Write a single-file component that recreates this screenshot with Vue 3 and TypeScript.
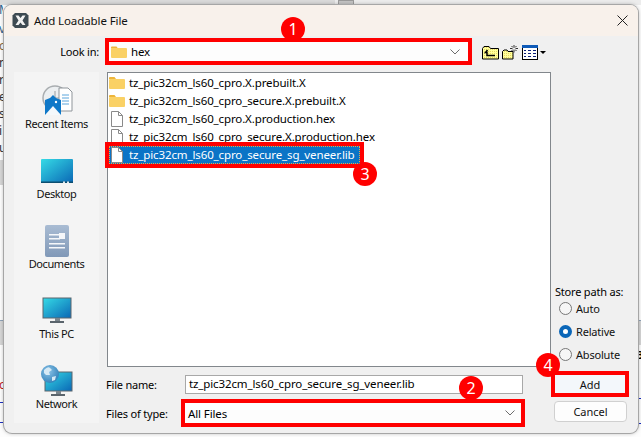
<template>
  <div class="desk">
    <div class="behind">
      <span
        v-for="g in glyphs"
        :key="g.y"
        class="glyph"
        :style="{ top: g.y + 'px', color: g.color }"
      >{{ g.ch }}</span>
      <div class="band left-band"></div>
      <div class="band low-band"></div>
      <div class="band right-band"></div>
      <div class="top-left"></div>
      <div class="scroll-btn"></div>
      <div class="blue-line" style="left: 0; top: 402px; width: 4px"></div>
      <div class="blue-line" style="left: 0; top: 422px; width: 4px"></div>
      <div class="blue-line" style="left: 637px; top: 398px; width: 4px"></div>
      <div class="blue-line" style="left: 637px; top: 423px; width: 4px"></div>
      <span class="side-mark">3</span>
    </div>

    <div class="dialog">
      <header class="titlebar">
        <svg class="logo" width="17" height="17" viewBox="0 0 17 17">
          <path d="M3 1h11l2.500 2.500v10L14 16H3L.5 13.500v-10z" fill="#3d4a52" />
          <path d="M3.500 3.500h3L8.500 6l2-2.500h3L10.500 8.500l3 4.500h-3L8.500 10.500 6.500 13h-3l3-4.500z" fill="#f2f2f2" />
        </svg>
        <span class="title">Add Loadable File</span>
        <svg class="close" width="11" height="11" viewBox="0 0 11 11">
          <path d="M.5.5l10 10M10.500.5l-10 10" stroke="#222" stroke-width="1" fill="none" />
        </svg>
      </header>

      <div class="look-row">
        <label class="look-label">Look in:</label>
        <div class="combo look-combo marked">
          <svg width="16" height="16" viewBox="0 0 16 16" class="combo-folder">
            <path d="M0 3.500a1 1 0 0 1 1-1h4.500l1.500 2H0z" fill="#eeb53a" />
            <rect x="0" y="4" width="16" height="10" rx="1" fill="#fad165" />
          </svg>
          <span class="file-text">hex</span>
          <svg class="chev" width="10" height="6" viewBox="0 0 10 6">
            <path d="M.5.500L5 5 9.500.5" stroke="#6d6d6d" fill="none" />
          </svg>
        </div>
        <div class="tools">
          <svg width="17" height="15" viewBox="0 0 17 15">
            <path d="M.5 14V3.500L2 1.500h5l1.500 2h8V14z" fill="url(#dith)" stroke="#000" />
            <path d="M5.500 5L3.500 7.500h1.500v3h8" stroke="#000" stroke-width="1.500" fill="none" />
          </svg>
          <svg width="16" height="15" viewBox="0 0 16 15" class="tool-new">
            <path d="M.5 14V6.500L2 5h3l1 1.500h5V14z" fill="url(#dith)" stroke="#000" />
            <path d="M12 0v2.500M12 5v2.500M8 3.500h2.500M13.500 3.500H16M9.500 1l1.500 1.500M14.500 1L13 2.500M9.500 6L11 4.500M14.500 6L13 4.500" stroke="#333" />
          </svg>
          <svg width="16" height="15" viewBox="0 0 16 15" class="tool-view">
            <rect x=".5" y=".5" width="15" height="14" fill="#fff" stroke="#000" />
            <rect x="0" y="0" width="16" height="3" fill="#0f5bb8" />
            <path d="M2 5h2v1H2zM6 5h3v1H6zM11 5h3v1h-3zM2 8h2v1H2zM6 8h3v1H6zM11 8h3v1h-3zM2 11h2v1H2zM6 11h3v1H6zM11 11h3v1h-3z" fill="#0b1f7a" />
          </svg>
          <i class="caret"></i>
        </div>
      </div>

      <div class="middle">
        <nav class="places">
          <div v-for="p in places" :key="p" class="place">
            <svg v-if="p === 'Recent Items'" width="32" height="32" viewBox="0 0 32 32">
              <circle cx="14" cy="13" r="12" fill="#eceff1" stroke="#a9adb0" stroke-width="1.500" />
              <path d="M14 6v7h5" stroke="#9a9ea1" fill="none" />
              <path d="M18 3h9l4 4v19H18z" fill="#fff" stroke="#8f959a" />
              <path d="M21 10h7M21 13h7M21 16h7M21 19h7" stroke="#5aa5dc" />
              <path d="M4 15l5-2 3-3 3 3 5 2v15H4z" fill="#0f78c8" />
              <path d="M4 30l8-9 8 9z" fill="#f4f8fb" />
              <circle cx="15" cy="17" r="1.200" fill="#fff" />
            </svg>
            <svg v-else-if="p === 'Desktop'" width="32" height="32" viewBox="0 0 32 32">
              <defs>
                <linearGradient id="screen" x1="0" y1="0" x2="1" y2="1">
                  <stop offset="0" stop-color="#35dbe6" />
                  <stop offset="1" stop-color="#0a67b5" />
                </linearGradient>
              </defs>
              <path d="M0 5a1 1 0 0 1 1-1h30a1 1 0 0 1 1 1v23H0z" fill="url(#screen)" />
              <rect x="0" y="26.500" width="32" height="1.500" fill="#0c4e70" />
              <rect x="22" y="26.500" width="2" height="1.500" fill="#dfe9ef" />
              <rect x="26" y="26.500" width="2" height="1.500" fill="#dfe9ef" />
            </svg>
            <svg v-else-if="p === 'Documents'" width="32" height="32" viewBox="0 0 32 32">
              <defs>
                <linearGradient id="doc" x1="0" y1="0" x2="0" y2="1">
                  <stop offset="0" stop-color="#a9bcd3" />
                  <stop offset="1" stop-color="#8098b7" />
                </linearGradient>
              </defs>
              <rect x="4" y="0" width="24" height="32" rx="2" fill="url(#doc)" />
              <path d="M8 9h11v1.500H8zM8 13h11v1.500H8zM8 18h16v1.500H8zM8 22h16v1.500H8z" fill="#f5f7fa" />
              <rect x="18" y="8" width="6" height="6" fill="#f5f7fa" />
            </svg>
            <svg v-else-if="p === 'This PC'" width="32" height="32" viewBox="0 0 32 32">
              <defs>
                <linearGradient id="pc" x1="0" y1="0" x2="1" y2="1">
                  <stop offset="0" stop-color="#35dbe6" />
                  <stop offset="1" stop-color="#0a67b5" />
                </linearGradient>
              </defs>
              <rect x="2" y="3" width="28" height="20" fill="url(#pc)" stroke="#5a646c" />
              <rect x="14" y="23" width="5" height="3" fill="#7b858c" />
              <rect x="9" y="26" width="14" height="2" fill="#5a646c" />
            </svg>
            <svg v-else width="32" height="32" viewBox="0 0 32 32">
              <defs>
                <linearGradient id="net" x1="0" y1="0" x2="1" y2="1">
                  <stop offset="0" stop-color="#35dbe6" />
                  <stop offset="1" stop-color="#0a67b5" />
                </linearGradient>
                <radialGradient id="globe" cx="0.4" cy="0.35" r="0.7">
                  <stop offset="0" stop-color="#8cc4e8" />
                  <stop offset="1" stop-color="#2f7fb8" />
                </radialGradient>
              </defs>
              <rect x="4" y="7" width="27" height="19" fill="url(#net)" stroke="#5a646c" />
              <rect x="15" y="26" width="5" height="3" fill="#7b858c" />
              <rect x="10" y="29" width="14" height="2" fill="#5a646c" />
              <circle cx="9" cy="9" r="9" fill="url(#globe)" />
              <path d="M3 5q4-4 6-2l2 2-3 2 1 3-4 0-2-2zM11 12l4-1-1 4-3 1z" fill="#d5e9f5" />
            </svg>
            <span>{{ p }}</span>
          </div>
        </nav>

        <div class="center">
          <div class="list">
            <div
              v-for="f in files"
              :key="f.name"
              class="file"
              :class="{ selected: f.selected }"
            >
              <svg v-if="f.kind === 'dir'" width="16" height="16" viewBox="0 0 16 16">
                <path d="M0 3a1 1 0 0 1 1-1h4.500l1.500 2H0z" fill="#eeb53a" />
                <rect x="0" y="4" width="16" height="10" rx="1" fill="#fad165" />
              </svg>
              <svg v-else width="16" height="16" viewBox="0 0 16 16">
                <path d="M2.500.5h7l4 4v11h-11z" fill="#fff" stroke="#8a8a8a" />
                <path d="M9.500.5v4h4" fill="none" stroke="#8a8a8a" />
              </svg>
              <span class="file-name file-text">{{ f.name }}</span>
            </div>
          </div>
          <div class="field-row name-row">
            <label>File name:</label>
            <div class="name-input file-text">tz_pic32cm_ls60_cpro_secure_sg_veneer.lib</div>
          </div>
          <div class="field-row type-row">
            <label>Files of type:</label>
            <div class="combo type-combo marked">
              <span class="file-text">All Files</span>
              <svg class="chev" width="10" height="6" viewBox="0 0 10 6">
                <path d="M.5.500L5 5 9.500.5" stroke="#6d6d6d" fill="none" />
              </svg>
            </div>
          </div>
        </div>

        <aside class="store">
          <div class="store-title">Store path as:</div>
          <div v-for="o in storeOptions" :key="o" class="radio-row">
            <i class="radio" :class="{ on: o === 'Relative' }"></i>
            <span>{{ o }}</span>
          </div>
          <button class="btn add marked">Add</button>
          <button class="btn cancel">Cancel</button>
        </aside>
      </div>

      <span
        v-for="b in badges"
        :key="b.n"
        class="badge"
        :style="{ left: b.x + 'px', top: b.y + 'px' }"
      >{{ b.n }}</span>
    </div>

    <svg width="0" height="0" class="defs">
      <defs>
        <pattern id="dith" width="2" height="2" patternUnits="userSpaceOnUse">
          <rect width="2" height="2" fill="#ffff9c" />
          <rect width="1" height="1" fill="#e8d860" />
        </pattern>
      </defs>
    </svg>
  </div>
</template>

<script setup lang="ts">
interface FileRow {
  name: string
  kind: 'dir' | 'file'
  selected?: boolean
}

const places = ['Recent Items', 'Desktop', 'Documents', 'This PC', 'Network']

const files: FileRow[] = [
  { name: 'tz_pic32cm_ls60_cpro.X.prebuilt.X', kind: 'dir' },
  { name: 'tz_pic32cm_ls60_cpro_secure.X.prebuilt.X', kind: 'dir' },
  { name: 'tz_pic32cm_ls60_cpro.X.production.hex', kind: 'file' },
  { name: 'tz_pic32cm_ls60_cpro_secure.X.production.hex', kind: 'file' },
  { name: 'tz_pic32cm_ls60_cpro_secure_sg_veneer.lib', kind: 'file', selected: true }
]

const storeOptions = ['Auto', 'Relative', 'Absolute']

// badge centres minus radius, relative to the dialog
const badges = [
  { n: 1, x: 277, y: 12 },
  { n: 3, x: 349, y: 157 },
  { n: 2, x: 455, y: 371 },
  { n: 4, x: 532, y: 348 }
]

const glyphs = [
  { ch: 'M', y: 3, color: '#2a5f8a' },
  { ch: 'v', y: 22, color: '#2a5f8a' },
  { ch: 'o', y: 39, color: '#8a6a3a' },
  { ch: 'n', y: 56, color: '#333' },
  { ch: 'r', y: 73, color: '#333' },
  { ch: 'e', y: 90, color: '#333' },
  { ch: 's', y: 107, color: '#333' },
  { ch: 'i', y: 124, color: '#333' },
  { ch: 'u', y: 141, color: '#333' },
  { ch: 'x', y: 166, color: '#333' },
  { ch: 'o', y: 378, color: '#c01818' }
]
</script>

<style>
html,
body {
  margin: 0;
  background: #fff;
  overflow: hidden;
}
</style>

<style scoped>
.desk {
  position: relative;
  width: 641px;
  height: 437px;
  overflow: hidden;
  font-family: "Noto Sans", "Liberation Sans", sans-serif;
  font-size: 11px;
  letter-spacing: -0.2px;
  color: #000;
  background: #fdfdfd;
}

.behind {
  position: absolute;
  inset: 0;
}

.glyph {
  position: absolute;
  left: -1px;
  width: 4px;
  overflow: hidden;
  font-size: 12px;
  line-height: 14px;
}

.band {
  position: absolute;
  background: #d6d6d6;
}

.left-band {
  left: 0;
  top: 160px;
  width: 4px;
  height: 25px;
}

.low-band {
  left: 0;
  top: 320px;
  width: 641px;
  height: 25px;
  border-top: 1px solid #8fa3b8;
  box-sizing: border-box;
}

.right-band {
  left: 0;
  top: 0;
  width: 641px;
  height: 5px;
  background: #ececec;
}

.top-left {
  position: absolute;
  left: 0;
  top: 0;
  width: 335px;
  height: 5px;
  background: #dadada;
}

.scroll-btn {
  position: absolute;
  left: 338px;
  top: 0;
  width: 16px;
  height: 6px;
  background: #c4c4c4;
  border: 1px solid #9a9a9a;
  box-sizing: border-box;
}

.blue-line {
  position: absolute;
  height: 1px;
  background: #1c2fc0;
}

.side-mark {
  position: absolute;
  left: 637px;
  top: 347px;
  width: 4px;
  overflow: hidden;
  font-weight: 700;
  line-height: 16px;
}

.defs {
  position: absolute;
}

.dialog {
  position: absolute;
  left: 4px;
  top: 5px;
  width: 634px;
  height: 428px;
  box-sizing: border-box;
  display: flex;
  flex-direction: column;
  background: #f0f0f0;
  border-radius: 8px;
  box-shadow: 0 0 0 1px #a6a6a6, 0 0 4px rgba(0, 0, 0, 0.35);
}

.titlebar {
  height: 31px;
  flex: none;
  display: flex;
  align-items: center;
  padding: 0 10px 0 8px;
  background: #f8f1eb;
  border-radius: 8px 8px 0 0;
}

.logo {
  flex: none;
}

.title {
  margin-left: 5px;
  font-size: 11.5px;
  letter-spacing: -0.1px;
  color: #111;
}

.close {
  margin-left: auto;
}

.file-text {
  font-size: 11.5px;
  letter-spacing: -0.12px;
}

.look-row {
  height: 36px;
  flex: none;
  box-sizing: border-box;
  padding-top: 6px;
  display: flex;
  align-items: flex-start;
}

.look-label {
  width: 95px;
  text-align: right;
  line-height: 19px;
}

.marked {
  outline: 4px solid #f00;
}

.combo {
  display: flex;
  align-items: center;
  box-sizing: border-box;
  background: #fdfdfd;
}

.look-combo {
  width: 359px;
  height: 19px;
  margin-left: 10px;
  padding: 0 8px 0 2px;
}

.combo-folder {
  margin-right: 4px;
  flex: none;
}

.chev {
  margin-left: auto;
  flex: none;
}

.tools {
  display: flex;
  align-items: center;
  margin: 3px 0 0 14px;
}

.tool-new {
  margin-left: 3px;
}

.tool-view {
  margin-left: 4px;
}

.caret {
  width: 0;
  height: 0;
  margin-left: 2px;
  border: 3px solid transparent;
  border-top: 3px solid #000;
  border-bottom: 0;
}

.middle {
  flex: 1;
  display: flex;
  padding-left: 10px;
  min-height: 0;
}

.places {
  width: 85px;
  height: 351px;
  box-sizing: border-box;
  padding-top: 13px;
  background: #f4f4f4;
  display: flex;
  flex-direction: column;
  flex: none;
}

.place {
  height: 70px;
  flex: none;
  display: flex;
  flex-direction: column;
  align-items: center;
  line-height: 13px;
  letter-spacing: -0.4px;
  color: #111;
}

.center {
  width: 444px;
  margin-left: 8px;
  flex: none;
}

.list {
  height: 295px;
  box-sizing: border-box;
  padding: 1px;
  background: #fff;
  border: 1px solid #82878c;
  display: flex;
  flex-direction: column;
  align-items: flex-start;
}

.file {
  height: 18px;
  display: flex;
  align-items: center;
  box-sizing: border-box;
  padding-right: 5px;
}

.file-name {
  margin: -2px 0 0 4px;
  white-space: nowrap;
}

.file.selected {
  background: #0b74c6;
  color: #fff;
  outline: 1px dotted #e8a44c;
  outline-offset: -1px;
  box-shadow: 0 0 0 4px #f00;
}

.field-row {
  display: flex;
  align-items: center;
}

.field-row label {
  width: 78px;
  margin-left: -1px;
  flex: none;
}

.name-row {
  margin-top: 8px;
  height: 19px;
}

.name-input {
  width: 338px;
  height: 19px;
  box-sizing: border-box;
  margin-left: 1px;
  padding-left: 3px;
  background: #fff;
  border: 1px solid #a8a8a8;
  line-height: 16px;
  white-space: nowrap;
  overflow: hidden;
}

.type-row {
  margin-top: 9px;
  height: 20px;
}

.type-combo {
  width: 336px;
  height: 20px;
  margin-left: 1px;
  padding: 0 6px 0 3px;
}

.store {
  width: 76px;
  margin-left: 4px;
  height: 351px;
  box-sizing: border-box;
  display: flex;
  flex-direction: column;
  justify-content: flex-end;
}

.store-title {
  line-height: 16px;
  margin-bottom: -3px;
  white-space: nowrap;
}

.radio-row {
  height: 23px;
  display: flex;
  align-items: center;
  padding-left: 4px;
  color: #111;
}

.radio {
  width: 13px;
  height: 13px;
  box-sizing: border-box;
  margin-right: 4px;
  border: 1px solid #777;
  border-radius: 50%;
  background: #f6f6f6;
}

.radio.on {
  border: 4px solid #0a66b8;
  background: #fff;
}

.btn {
  display: block;
  box-sizing: border-box;
  padding: 0;
  font: inherit;
  color: #111;
}

.add {
  width: 70px;
  height: 18px;
  margin-top: 9px;
  background: #f3f7fb;
  border: 0;
}

.cancel {
  width: 73px;
  height: 21px;
  margin: 8px 0 1px -1px;
  background: #fdfdfd;
  border: 1px solid #d0d0d0;
  border-radius: 4px;
}

.badge {
  position: absolute;
  width: 24px;
  height: 24px;
  border-radius: 50%;
  background: #f00;
  color: #fff;
  font-size: 16px;
  line-height: 24px;
  text-align: center;
}
</style>
